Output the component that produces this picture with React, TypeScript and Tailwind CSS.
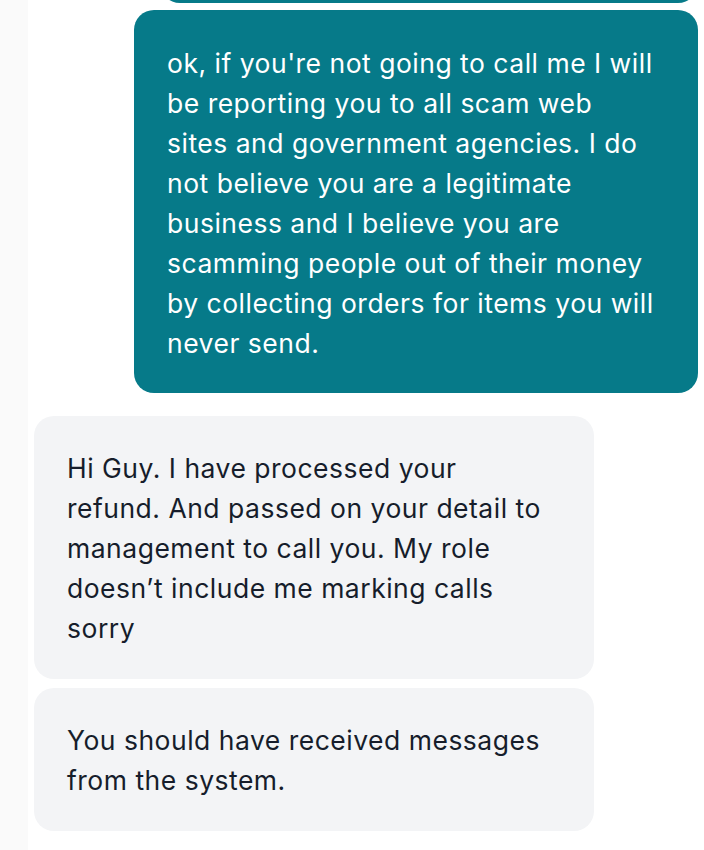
import React from 'react';

interface Message {
  id: number;
  lines: string[];
  mine: boolean;
}

// lines are kept as the app wrapped them on screen
const messages: Message[] = [
  {
    id: 1,
    mine: true,
    lines: [
      "ok, if you're not going to call me I will",
      'be reporting you to all scam web',
      'sites and government agencies. I do',
      'not believe you are a legitimate',
      'business and I believe you are',
      'scamming people out of their money',
      'by collecting orders for items you will',
      'never send.',
    ],
  },
  {
    id: 2,
    mine: false,
    lines: [
      'Hi Guy. I have processed your',
      'refund. And passed on your detail to',
      'management to call you. My role',
      'doesn\u2019t include me marking calls',
      'sorry',
    ],
  },
  {
    id: 3,
    mine: false,
    lines: ['You should have received messages', 'from the system.'],
  },
];

const Bubble: React.FC<{ message: Message }> = ({ message }) => {
  const body = (
    <p className="text-[26.5px] leading-[40px] tracking-[0.5px]">
      {message.lines.map((line, i) => (
        <span key={i} className="block whitespace-nowrap">
          {line}
        </span>
      ))}
    </p>
  );

  if (message.mine) {
    return (
      <div className="self-end w-[564px] rounded-[20px] bg-[#067a89] px-[33px] pt-[33px] pb-[30px] text-white">
        {body}
      </div>
    );
  }
  return (
    <div className="self-start w-[560px] rounded-[20px] bg-[#f3f4f6] px-[33px] pt-[32px] pb-[31px] text-[#161d2b]">
      {body}
    </div>
  );
};

export default function App() {
  return (
    <div className="flex h-[850px] w-[704px] overflow-hidden bg-white font-['Inter',sans-serif]">
      <div className="w-[28px] shrink-0 bg-[#fafafa]" />
      <div className="flex flex-1 flex-col px-[6px]">
        {/* previous message, scrolled mostly out of view */}
        <div className="-mt-[37px] h-[40px] w-[538px] shrink-0 self-end rounded-[20px] bg-[#067a89]" />
        <div className="mt-[7px] flex flex-col">
          <Bubble message={messages[0]} />
        </div>
        <div className="mt-[23px] flex flex-col gap-[9px]">
          <Bubble message={messages[1]} />
          <Bubble message={messages[2]} />
        </div>
      </div>
    </div>
  );
}
